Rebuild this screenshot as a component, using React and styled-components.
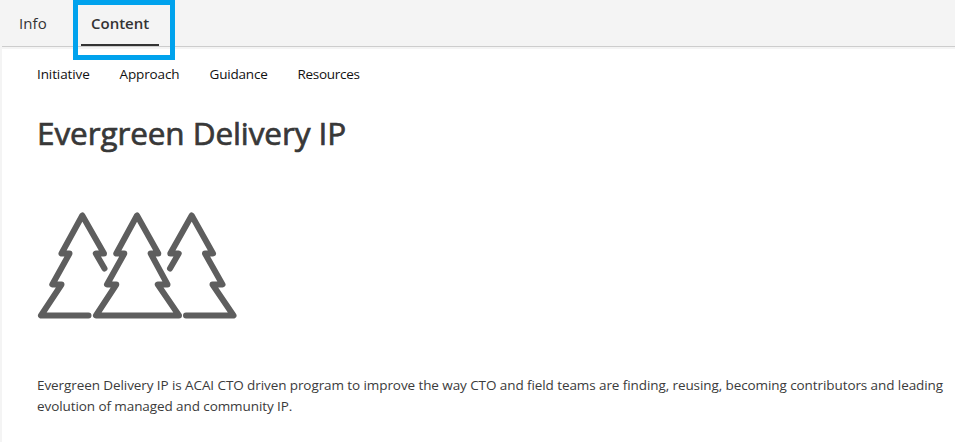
import React from 'react';
import styled, { createGlobalStyle } from 'styled-components';

const GlobalStyle = createGlobalStyle`
  * { box-sizing: border-box; }
  body {
    margin: 0;
    background: #f4f4f4;
    font-family: 'Open Sans', 'Noto Sans', sans-serif;
    overflow: hidden;
  }
`;

const Page = styled.div`
  display: flex;
  flex-direction: column;
  height: 442px;
  padding-left: 2px;
`;

const TabBar = styled.nav`
  display: flex;
  flex: none;
  height: 47px;
  margin-bottom: 2px;
  border-bottom: 1px solid #cdcdcd;
`;

const Tab = styled.button`
  position: relative;
  width: ${(p) => p.$width}px;
  height: 46px;
  margin-right: 17px;
  padding: 0 0 0 ${(p) => p.$inset}px;
  border: 0;
  border-bottom: 2px solid ${(p) => (p.$active ? '#333' : 'transparent')};
  background: none;
  color: #333;
  font: ${(p) => (p.$active ? 600 : 400)} 15px/46px 'Open Sans', sans-serif;
  letter-spacing: ${(p) => p.$spacing}px;
  text-align: left;
`;

const Highlight = styled.span`
  position: absolute;
  top: 0;
  left: -8px;
  width: 102px;
  height: 60px;
  border: 5px solid #00a2ed;
`;

const Content = styled.main`
  flex: 1;
  padding: 15px 0 0 35px;
  background: #fff;
`;

const SubNav = styled.nav`
  display: flex;
  height: 20px;
`;

const SubLink = styled.a`
  flex: none;
  width: ${(p) => p.$width}px;
  color: #111;
  font-size: 13.5px;
  line-height: 20px;
  letter-spacing: ${(p) => p.$spacing}px;
  white-space: nowrap;
`;

const Title = styled.h1`
  margin: 27px 0 0;
  color: #383838;
  font-size: 31.5px;
  font-weight: 400;
  line-height: 44px;
  letter-spacing: -0.1px;
  white-space: nowrap;
  -webkit-text-stroke: 0.7px #383838;
`;

const Trees = styled.svg`
  display: block;
  width: 200px;
  height: 110px;
  margin-top: 55px;
  fill: none;
  stroke: #5e5e5e;
  stroke-width: 6;
  stroke-linecap: round;
  stroke-linejoin: round;
`;

const Description = styled.p`
  margin: 55px 0 0;
  color: #3b3b3b;
  font-size: 13.5px;
  line-height: 21px;
`;

const Line = styled.span`
  display: block;
  letter-spacing: ${(p) => p.$spacing}px;
  white-space: nowrap;
`;

const links = [
  ['Initiative', 82.5, -0.1],
  ['Approach', 90, -0.12],
  ['Guidance', 88, -0.18],
  ['Resources', 70, -0.3],
];

export default function App() {
  return (
    <>
      <GlobalStyle />
      <Page>
        <TabBar>
          <Tab $width={62} $inset={17} $spacing={0.1}>Info</Tab>
          <Tab $width={78} $inset={10} $spacing={0} $active>
            Content
            <Highlight />
          </Tab>
        </TabBar>
        <Content>
          <SubNav>
            {links.map(([label, width, spacing]) => (
              <SubLink key={label} $width={width} $spacing={spacing}>{label}</SubLink>
            ))}
          </SubNav>
          <Title>Evergreen Delivery IP</Title>
          <Trees viewBox="37 210 200 110" aria-hidden="true">
            <path d="M104.5 268.5 95.8 253.5H104L82.3 215.5 61.5 253.5H69.5L52.3 284.5H61.5L41 315.5H88.5" />
            <path d="M137 215.5 116.3 253.5H124.3L107 284.5H116.3L96 315.5H179L157.8 284.5H167.5L150.7 253.5H158.3Z" />
            <path d="M170 268.5 178.7 253.5H170.3L191.7 215.5 213 253.5H205L222.5 284.5H212.5L233.5 315.5H186" />
          </Trees>
          <Description>
            <Line $spacing={-0.086}>
              Evergreen Delivery IP is ACAI CTO driven program to improve the way CTO and field teams are finding, reusing, becoming contributors and leading
            </Line>
            <Line $spacing={-0.086}>evolution of managed and community IP.</Line>
          </Description>
        </Content>
      </Page>
    </>
  );
}
